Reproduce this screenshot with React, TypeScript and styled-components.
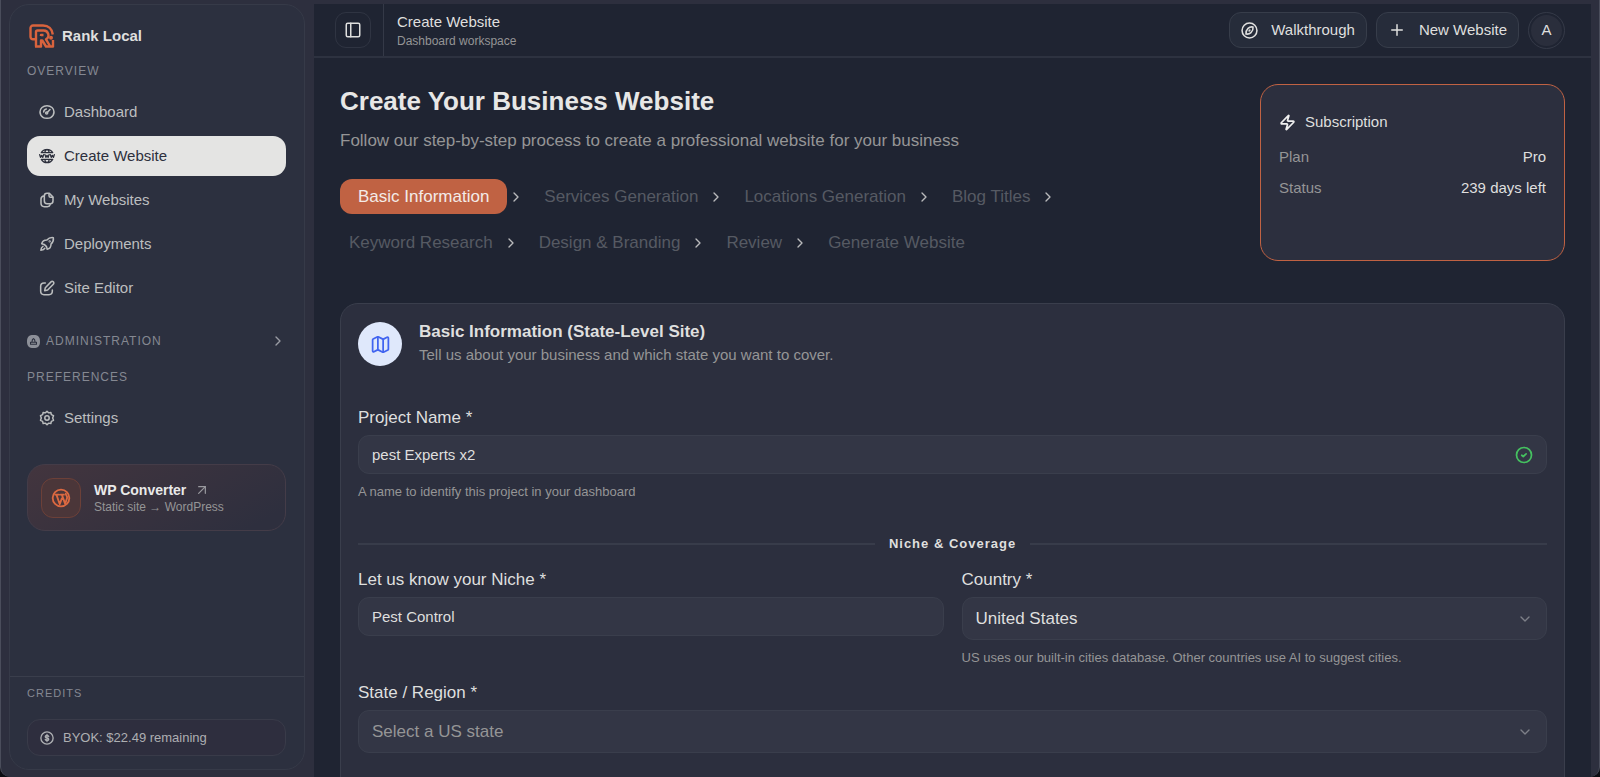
import React from "react";
import styled, { createGlobalStyle, css } from "styled-components";
import { ArrowUpRight, ChevronDown, ChevronRight, Map as MapIcon, PanelLeft, Plus, Zap } from "lucide-react";

const c = {
  frame: "#2d2f3e",
  side: "#2c303f",
  main: "#1f2432",
  card: "#2c2f3e",
  field: "#333645",
  line: "#3a3e4c",
  text: "#dfdfde",
  soft: "#bcbebf",
  muted: "#959596",
  faint: "#565a63",
  accent: "#c06243",
};

const Global = createGlobalStyle`
  *, *::before, *::after { box-sizing: border-box; }
  body { margin: 0; background: #0b0c12; color: ${c.text}; font-family: "Liberation Sans", Arial, Helvetica, sans-serif; font-size: 15px; line-height: 20px; }
  button, input, select { font: inherit; color: inherit; margin: 0; }
  h1, h2, h3, p, ul, ol, dl, dd { margin: 0; padding: 0; }
  ul, ol { list-style: none; }
  a { color: inherit; text-decoration: none; }
  svg { flex: none; display: block; }
`;

const Window = styled.div`
  display: flex;
  height: 100vh;
  padding: 4px 8px 0;
  overflow: hidden;
  background: ${c.frame};
  border: solid #4a4d5b;
  border-width: 0 1px;
  border-radius: 0 0 10px 10px;
`;

const Sidebar = styled.aside`
  display: flex;
  flex-direction: column;
  flex: none;
  width: 296px;
  margin: 0 9px 7px 0;
  background: ${c.side};
  border: 1px solid #363a48;
  border-radius: 20px;
`;

const SideBody = styled.div`
  flex: 1;
  display: flex;
  flex-direction: column;
  padding: 18px 18px 0 17px;
`;

const Brand = styled.a`
  display: flex;
  align-items: center;
  gap: 7px;
  height: 26px;
  padding-left: 2px;
  font-size: 15px;
  font-weight: 700;
`;

const SectionTitle = styled.h3<{ $small?: boolean }>`
  font-size: ${(p) => (p.$small ? 11 : 12)}px;
  line-height: 16px;
  font-weight: 400;
  letter-spacing: 1px;
  text-transform: uppercase;
  color: #858892;
`;

const NavTitle = styled(SectionTitle)`
  margin: 14px 0 13px;
`;

const NavList = styled.ul`
  display: flex;
  flex-direction: column;
  gap: 4px;
`;

const NavLink = styled.a<{ $active?: boolean }>`
  display: flex;
  align-items: center;
  gap: 9px;
  height: 40px;
  padding: 0 12px;
  border-radius: 13px;
  color: ${c.soft};
  ${(p) => p.$active && css`background: #e4e4e3; color: #2d303d;`}
`;

const AdminToggle = styled.button`
  display: flex;
  align-items: center;
  gap: 6px;
  height: 20px;
  margin: 23px 0 4px;
  padding: 0;
  border: 0;
  background: none;
  text-align: left;
  color: #9a9ca4;
`;

const Grow = styled.span`
  flex: 1;
`;

const Converter = styled.a`
  display: flex;
  align-items: center;
  gap: 13px;
  height: 67px;
  margin-top: 26px;
  padding: 0 13px;
  border: 1px solid #443c48;
  border-radius: 18px;
  background: linear-gradient(150deg, #43353e, #2e2f3e 90%);
`;

const ConverterMark = styled.span`
  display: grid;
  place-items: center;
  width: 40px;
  height: 40px;
  border: 1px solid #6c4038;
  border-radius: 12px;
  background: #4b3639;
  color: #dc6941;
`;

const ConverterName = styled.span`
  display: flex;
  align-items: center;
  gap: 8px;
  font-size: 14px;
  font-weight: 700;
  line-height: 18px;
  color: #e9e9e9;
`;

const Small = styled.p`
  font-size: 12px;
  line-height: 16px;
  color: ${c.muted};
`;

const Credits = styled.div`
  padding: 8px 18px 13px 17px;
  border-top: 1px solid ${c.line};
`;

const CreditPill = styled.div`
  display: flex;
  align-items: center;
  gap: 9px;
  height: 37px;
  margin-top: 18px;
  padding: 0 12px;
  border: 1px solid #393b49;
  border-radius: 13px;
  background: #2e2e3e;
  font-size: 13px;
  color: #adafb2;
`;

const Main = styled.div`
  flex: 1;
  min-width: 0;
  display: flex;
  flex-direction: column;
  background: ${c.main};
`;

const TopBar = styled.header`
  display: flex;
  align-items: center;
  flex: none;
  height: 54px;
  padding: 0 26px 0 21px;
  border-bottom: 2px solid #2d3240;
`;

const IconButton = styled.button`
  display: grid;
  place-items: center;
  width: 36px;
  height: 36px;
  padding: 0;
  border: 1px solid #2f3442;
  border-radius: 11px;
  background: transparent;
`;

const Crumb = styled.div`
  display: flex;
  flex-direction: column;
  justify-content: center;
  gap: 1px;
  align-self: stretch;
  margin-left: 12px;
  padding-left: 13px;
  border-left: 1px solid #343947;
`;

const Actions = styled.div`
  display: flex;
  align-items: center;
  gap: 9px;
  margin-left: auto;
`;

const ActionButton = styled.button`
  display: flex;
  align-items: center;
  gap: 13px;
  height: 36px;
  padding: 0 11px;
  border: 1px solid #373d4a;
  border-radius: 12px;
  background: #262c3a;
`;

const Avatar = styled.button`
  width: 37px;
  height: 37px;
  padding: 0;
  border: 1px solid #343947;
  border-radius: 50%;
  background: #2a2e3c;
  box-shadow: inset 0 0 0 2px ${c.main};
`;

const Content = styled.main`
  flex: 1;
  min-height: 0;
  overflow: hidden;
  padding: 26px 26px 0;
`;

const Hero = styled.div`
  display: flex;
  align-items: flex-start;
  justify-content: space-between;
  gap: 24px;
`;

const HeroText = styled.div`
  flex: 1;
  max-width: 780px;
`;

const Title = styled.h1`
  font-size: 26px;
  line-height: 34px;
  font-weight: 700;
  color: #e7e7e6;
`;

const Lead = styled.p`
  margin-top: 11px;
  font-size: 17px;
  line-height: 24px;
  color: ${c.muted};
`;

const Steps = styled.ol`
  display: flex;
  flex-wrap: wrap;
  gap: 11px;
  margin-top: 26px;
`;

const Step = styled.li`
  display: flex;
  align-items: center;
  gap: 1px;
  color: #b9babc;
`;

const StepButton = styled.button<{ $active?: boolean }>`
  height: 35px;
  padding: 0 ${(p) => (p.$active ? 18 : 9)}px;
  border: 0;
  border-radius: 12px;
  background: ${(p) => (p.$active ? c.accent : "transparent")};
  font-size: 17px;
  color: ${(p) => (p.$active ? "#f3ebe8" : c.faint)};
`;

const Plan = styled.section`
  flex: none;
  width: 305px;
  height: 177px;
  padding: 27px 18px;
  border: 1px solid ${c.accent};
  border-radius: 18px;
  background: ${c.card};
`;

const PlanTitle = styled.h2`
  display: flex;
  align-items: center;
  gap: 9px;
  font-size: 15px;
  line-height: 20px;
  font-weight: 400;
`;

const PlanRow = styled.div`
  display: flex;
  justify-content: space-between;
  margin-top: 15px;
  line-height: 20px;
  & + & { margin-top: 11px; }
  dt { color: ${c.muted}; }
`;

const Card = styled.section`
  margin-top: 42px;
  padding: 18px 17px 60px;
  border: 1px solid ${c.line};
  border-radius: 18px;
  background: ${c.card};
`;

const CardHead = styled.header`
  display: flex;
  align-items: flex-start;
  gap: 17px;
`;

const Badge = styled.span`
  display: grid;
  place-items: center;
  width: 44px;
  height: 44px;
  border-radius: 50%;
  background: #dfe8fb;
  color: #4164f0;
`;

const CardTitle = styled.h2`
  font-size: 17px;
  line-height: 20px;
  font-weight: 700;
`;

const CardSub = styled.p`
  margin-top: 3px;
  color: ${c.muted};
`;

const Field = styled.div<{ $top?: number }>`
  margin-top: ${(p) => p.$top ?? 0}px;
`;

const Label = styled.label`
  display: block;
  font-size: 17px;
  line-height: 22px;
  margin-bottom: 6px;
`;

const Control = styled.div`
  position: relative;
  display: flex;
`;

const fieldBox = css`
  width: 100%;
  padding: 0 13px;
  border: 1px solid ${c.line};
  border-radius: 11px;
  background: ${c.field};
  outline: none;
`;

const Input = styled.input`
  ${fieldBox}
  height: 39px;
`;

const Select = styled.select<{ $empty?: boolean }>`
  ${fieldBox}
  appearance: none;
  height: 43px;
  font-size: 17px;
  color: ${(p) => (p.$empty ? c.muted : c.text)};
`;

const Trailing = styled.span<{ $color: string }>`
  position: absolute;
  top: 0;
  bottom: 0;
  right: 14px;
  display: flex;
  align-items: center;
  color: ${(p) => p.$color};
  pointer-events: none;
`;

const Hint = styled.p`
  margin-top: 9px;
  font-size: 13px;
  line-height: 18px;
  color: ${c.muted};
`;

const Divider = styled.div`
  display: flex;
  align-items: center;
  gap: 14px;
  margin: 34px 0 16px;
  &::before, &::after { content: ""; flex: 1; height: 2px; background: #383c4a; }
`;

const DividerText = styled.h3`
  font-size: 13px;
  line-height: 18px;
  font-weight: 700;
  letter-spacing: 1px;
`;

const Columns = styled.div`
  display: grid;
  grid-template-columns: 1fr 1fr;
  gap: 18px;
`;

const Glyph = ({ size = 16, sw = 2.3, children }: { size?: number; sw?: number; children: React.ReactNode }) => (
  <svg width={size} height={size} viewBox="0 0 24 24" fill="none" stroke="currentColor" strokeWidth={sw} strokeLinecap="round" strokeLinejoin="round" aria-hidden="true">
    {children}
  </svg>
);

const Logo = () => (
  <svg width="26" height="24" viewBox="0 0 26 24" fill="none" stroke="#d9633d" strokeWidth="2.4" strokeLinejoin="round" aria-hidden="true">
    <path d="M7 15.300H4A2.500 2.500 0 0 1 1.500 12.800V4A2.500 2.500 0 0 1 4 1.500H14C19.500 1.500 23.200 5 23.800 10.500" />
    <path d="M7 22.500V8A1.500 1.500 0 0 1 8.500 6.500H14.500A4.700 4.700 0 0 1 17 15.300L21 22" />
    <path d="M6 22.500H12V16.500H13.300L17 22.500H24V16" />
    <path d="M12 12V11H14.500" />
    <circle cx="22" cy="13.800" r="2" fill="#d9633d" stroke="none" />
  </svg>
);

const DashboardIcon = () => (
  <Glyph>
    <path d="M6.500 20.500C3.500 18.500 1.500 16 1.500 12 1.500 6.500 6 2.500 12 2.500S22.500 6.500 22.500 12c0 4-2 6.500-5 8.500-1 .7-2.500 1-5.500 1s-4.500-.3-5.500-1Z" />
    <circle cx="11.500" cy="13.500" r="1.500" />
    <path d="m13 12 3.500-3.800M7 12A5 5 0 0 1 11 7.500" />
  </Glyph>
);

const GlobeIcon = () => (
  <Glyph sw={2}>
    <path d="M3.500 7C5.200 4 8.200 2 12 2s6.800 2 8.500 5ZM3.500 17c1.700 3 4.700 5 8.500 5s6.800-2 8.500-5ZM8.500 7C9 4.500 10.500 2.500 12 2c1.500.5 3 2.500 3.500 5M8.500 17c.5 2.500 2 4.500 3.500 5 1.500-.5 3-2.500 3.500-5" />
    <path d="m1 10 1.300 4L4 11l1.700 3L7 10M9 10l1.300 4L12 11l1.700 3L15 10M17 10l1.300 4L20 11l1.700 3L23 10" />
  </Glyph>
);

const CopyIcon = () => (
  <Glyph>
    <path d="M8 6c0-3 1.200-4 4-4h3.500L21 7.500V13c0 3-1.200 4.500-4 4.500h-5c-2.800 0-4-1.500-4-4.500Z" />
    <path d="M15 2.500V5.500c0 1.500.8 2.500 2.500 2.500h3M7.500 6C4.500 6.300 3 7.500 3 10.500V17c0 3.500 1.500 5 5 5h4.500c2.500 0 3.800-1 4.300-3" />
  </Glyph>
);

const RocketIcon = () => (
  <Glyph>
    <path d="M11.800 6C14.500 3 18 2 21.500 2.500 22 6 21 9.500 18 12.200c0 4-2 6.800-5.700 7.600L11.300 16l-3.500-3.400L4 11.500C5 8 7.800 6 11.800 6Z" />
    <path d="M6 15.500c-2 1-3 3-3.200 6 3-.2 5-1.200 6-3.200" />
    <circle cx="16" cy="8" r="0.600" />
  </Glyph>
);

const EditIcon = () => (
  <Glyph>
    <path d="M9.500 4.500H7.500C4 4.500 2.500 6 2.500 9.500V17c0 3.500 1.500 5 5 5H15c3.500 0 5-1.500 5-5v-2" />
    <path d="m9.500 11.500 8.500-8.700c1-1 2.500-1 3.500 0s1 2.500 0 3.500L13 15l-4.500 1Z" />
  </Glyph>
);

const GearIcon = () => (
  <Glyph sw={2.2}>
    <path d="M12 1.800 14.300 4.300 17.800 3.700 18.500 7 21.800 8.500 20.500 12l1.300 3.500-3.300 1.500-.7 3.300-3.500-.6L12 22.200l-2.300-2.500-3.500.6L5.500 17l-3.300-1.500L3.500 12 2.200 8.500 5.500 7l.7-3.300 3.500.6Z" />
    <circle cx="12" cy="12" r="3.300" />
  </Glyph>
);

const AdminIcon = () => (
  <svg width="13" height="13" viewBox="0 0 24 24" aria-hidden="true">
    <path fill="#8d9099" d="M12 0c8.500 0 12 3.500 12 12s-3.500 12-12 12S0 20.500 0 12 3.500 0 12 0Z" />
    <path fill="none" stroke="#2c303f" strokeWidth="2" strokeLinejoin="round" d="M6.500 17v-3.500h11V17ZM9 13.500l1-5 2-2 2 2 1 5" />
  </svg>
);

const WordPressIcon = () => (
  <Glyph size={20} sw={2.2}>
    <circle cx="12" cy="12" r="10" />
    <path d="M5 8h4.500M11.500 8H15.500M6.500 8l4 11.500L13 12.500M13 8l4 11L19.300 12c.7-2.300-1.600-3.200-1.600-5.200" />
  </Glyph>
);

const CoinIcon = () => (
  <Glyph size={14}>
    <circle cx="12" cy="12" r="10.500" />
    <path d="M15 9.500c-.3-1.200-1.500-1.800-3-1.800-1.800 0-3 .8-3 2.100 0 3 6 1.400 6 4.400 0 1.300-1.200 2.100-3 2.100-1.500 0-2.800-.6-3-1.800M12 6v12" />
  </Glyph>
);

const CompassIcon = () => (
  <Glyph size={17} sw={2.2}>
    <circle cx="12" cy="12" r="10.500" />
    <path d="M17 7c-3-.5-5.500.5-7 2S6.500 14 7 17c3 .5 5.500-.5 7-2s3.500-5 3-8ZM12.500 11.500l-1 1" />
  </Glyph>
);

const CheckIcon = () => (
  <Glyph size={18}>
    <circle cx="12" cy="12" r="10" />
    <path d="m9 12.300 2 1.700 3.800-3.500" />
  </Glyph>
);

const NAV = [
  { label: "Dashboard", icon: <DashboardIcon /> },
  { label: "Create Website", icon: <GlobeIcon />, active: true },
  { label: "My Websites", icon: <CopyIcon /> },
  { label: "Deployments", icon: <RocketIcon /> },
  { label: "Site Editor", icon: <EditIcon /> },
];

const STEPS = [
  "Basic Information",
  "Services Generation",
  "Locations Generation",
  "Blog Titles",
  "Keyword Research",
  "Design & Branding",
  "Review",
  "Generate Website",
];

export default function App() {
  return (
    <>
      <Global />
      <Window>
        <Sidebar>
          <SideBody>
            <Brand href="#"><Logo />Rank Local</Brand>
            <nav aria-label="Main">
              <NavTitle>Overview</NavTitle>
              <NavList>
                {NAV.map((n) => (
                  <li key={n.label}>
                    <NavLink href="#" $active={n.active}>{n.icon}{n.label}</NavLink>
                  </li>
                ))}
              </NavList>
            </nav>
            <AdminToggle type="button">
              <AdminIcon />
              <SectionTitle as="span">Administration</SectionTitle>
              <Grow />
              <ChevronRight size={16} />
            </AdminToggle>
            <NavTitle>Preferences</NavTitle>
            <NavLink href="#"><GearIcon />Settings</NavLink>
            <Converter href="#">
              <ConverterMark><WordPressIcon /></ConverterMark>
              <div>
                <ConverterName>WP Converter <ArrowUpRight size={16} strokeWidth={1.8} color="#9a9a9f" /></ConverterName>
                <Small>Static site → WordPress</Small>
              </div>
            </Converter>
          </SideBody>
          <Credits>
            <SectionTitle $small>Credits</SectionTitle>
            <CreditPill><CoinIcon />BYOK: $22.49 remaining</CreditPill>
          </Credits>
        </Sidebar>
        <Main>
          <TopBar>
            <IconButton type="button" aria-label="Toggle sidebar"><PanelLeft size={18} /></IconButton>
            <Crumb>
              <span>Create Website</span>
              <Small>Dashboard workspace</Small>
            </Crumb>
            <Actions>
              <ActionButton type="button"><CompassIcon />Walkthrough</ActionButton>
              <ActionButton type="button"><Plus size={18} />New Website</ActionButton>
              <Avatar type="button">A</Avatar>
            </Actions>
          </TopBar>
          <Content>
            <Hero>
              <HeroText>
                <Title>Create Your Business Website</Title>
                <Lead>Follow our step-by-step process to create a professional website for your business</Lead>
                <Steps>
                  {STEPS.map((s, i) => (
                    <Step key={s}>
                      <StepButton type="button" $active={i === 0}>{s}</StepButton>
                      {i < STEPS.length - 1 && <ChevronRight size={16} />}
                    </Step>
                  ))}
                </Steps>
              </HeroText>
              <Plan>
                <PlanTitle><Zap size={17} strokeWidth={2.4} color="#f0f0f0" />Subscription</PlanTitle>
                <dl>
                  <PlanRow><dt>Plan</dt><dd>Pro</dd></PlanRow>
                  <PlanRow><dt>Status</dt><dd>239 days left</dd></PlanRow>
                </dl>
              </Plan>
            </Hero>
            <Card>
              <CardHead>
                <Badge><MapIcon size={21} /></Badge>
                <div>
                  <CardTitle>Basic Information (State-Level Site)</CardTitle>
                  <CardSub>Tell us about your business and which state you want to cover.</CardSub>
                </div>
              </CardHead>
              <Field $top={41}>
                <Label htmlFor="project">Project Name *</Label>
                <Control>
                  <Input id="project" defaultValue="pest Experts x2" />
                  <Trailing $color="#45c160"><CheckIcon /></Trailing>
                </Control>
                <Hint>A name to identify this project in your dashboard</Hint>
              </Field>
              <Divider><DividerText>Niche &amp; Coverage</DividerText></Divider>
              <Columns>
                <Field>
                  <Label htmlFor="niche">Let us know your Niche *</Label>
                  <Input id="niche" defaultValue="Pest Control" />
                </Field>
                <Field>
                  <Label htmlFor="country">Country *</Label>
                  <Control>
                    <Select id="country" defaultValue="us">
                      <option value="us">United States</option>
                    </Select>
                    <Trailing $color="#7d8088"><ChevronDown size={16} /></Trailing>
                  </Control>
                  <Hint>US uses our built-in cities database. Other countries use AI to suggest cities.</Hint>
                </Field>
              </Columns>
              <Field $top={15}>
                <Label htmlFor="state">State / Region *</Label>
                <Control>
                  <Select id="state" defaultValue="" $empty>
                    <option value="">Select a US state</option>
                  </Select>
                  <Trailing $color="#7d8088"><ChevronDown size={16} /></Trailing>
                </Control>
              </Field>
            </Card>
          </Content>
        </Main>
      </Window>
    </>
  );
}
